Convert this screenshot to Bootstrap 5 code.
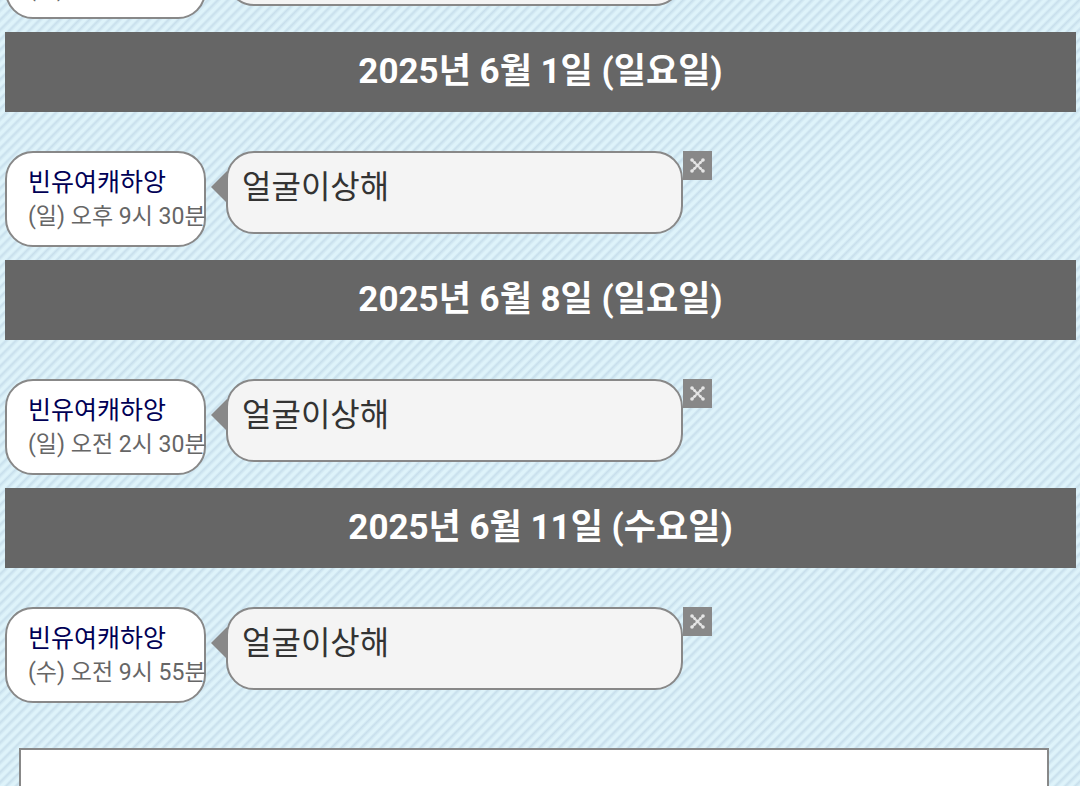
<!DOCTYPE html>
<html lang="ko">
<head>
<meta charset="utf-8">
<meta name="viewport" content="width=device-width, initial-scale=1">
<title>채팅 기록</title>
<link href="https://cdn.jsdelivr.net/npm/bootstrap@5.3.0/dist/css/bootstrap.min.css" rel="stylesheet">
<style>
  body {
    font-family: Roboto, "Noto Sans CJK KR", sans-serif;
    background: #def3fa repeating-linear-gradient(135deg, #c8dfec 0, #def3fa 3px, #def3fa 5px, #c8dfec 7px);
    height: 100vh;
    overflow: hidden;
  }
  .chat-log { margin-top: -77px; padding: 0 4px 0 5px; }
  .day-bar { background: #666; color: #fff; font-size: 35px; line-height: 80px; margin: 13px 0 39px; }
  .author {
    width: 201px; height: 96px; padding: 14px 0 0 21px; margin-right: 20px;
    background: #fff; border: 2px solid #888; border-radius: 28px;
  }
  .author-name { color: #005; font-size: 25px; line-height: 32px; text-decoration: none; }
  .author-time { color: #666; font-size: 23px; line-height: 36px; }
  .bubble {
    width: 457px; height: 83px; padding: 9px 14px; color: #333;
    font-size: 32px; line-height: 50px;
    background: #f4f4f4; border: 2px solid #888; border-radius: 28px;
  }
  .bubble::before {
    content: ""; position: absolute; left: -17px; top: 18px;
    border: solid transparent; border-width: 16px 16px 16px 0; border-right-color: #888;
  }
  .remove { width: 29px; height: 29px; background: #888; }
  .reply { height: 160px; margin: 45px 27px 0 14px; width: calc(100% - 41px); border: 2px solid #888; resize: none; }
</style>
</head>
<body>
<svg class="d-none">
  <symbol id="cross" viewBox="0 0 15 15">
    <path d="M2 2l11 11M13 2L2 13" stroke="#d8d8d8" stroke-width="2"/>
    <g fill="#e6e6e6"><circle cx="2" cy="2" r="1.8"/><circle cx="13" cy="2" r="1.8"/><circle cx="2" cy="13" r="1.8"/><circle cx="13" cy="13" r="1.8"/><circle cx="7.5" cy="7.5" r="1.8"/><circle cx="4.7" cy="4.7" r="1.4"/><circle cx="10.3" cy="4.7" r="1.4"/><circle cx="4.7" cy="10.3" r="1.4"/><circle cx="10.3" cy="10.3" r="1.4"/></g>
  </symbol>
</svg>
<main class="chat-log">
  <article class="d-flex align-items-start">
    <div class="author flex-shrink-0 text-nowrap"><a href="#" class="author-name d-block">빈유여캐하앙</a><div class="author-time">(일) 오후 9시 30분</div></div>
    <div class="bubble position-relative">얼굴이상해</div>
    <button type="button" class="remove border-0 p-0 d-flex align-items-center justify-content-center" aria-label="삭제"><svg width="15" height="15"><use href="#cross"/></svg></button>
  </article>

  <h2 class="day-bar text-center fw-bold">2025년 6월 1일 (일요일)</h2>
  <article class="d-flex align-items-start">
    <div class="author flex-shrink-0 text-nowrap"><a href="#" class="author-name d-block">빈유여캐하앙</a><div class="author-time">(일) 오후 9시 30분</div></div>
    <div class="bubble position-relative">얼굴이상해</div>
    <button type="button" class="remove border-0 p-0 d-flex align-items-center justify-content-center" aria-label="삭제"><svg width="15" height="15"><use href="#cross"/></svg></button>
  </article>

  <h2 class="day-bar text-center fw-bold">2025년 6월 8일 (일요일)</h2>
  <article class="d-flex align-items-start">
    <div class="author flex-shrink-0 text-nowrap"><a href="#" class="author-name d-block">빈유여캐하앙</a><div class="author-time">(일) 오전 2시 30분</div></div>
    <div class="bubble position-relative">얼굴이상해</div>
    <button type="button" class="remove border-0 p-0 d-flex align-items-center justify-content-center" aria-label="삭제"><svg width="15" height="15"><use href="#cross"/></svg></button>
  </article>

  <h2 class="day-bar text-center fw-bold">2025년 6월 11일 (수요일)</h2>
  <article class="d-flex align-items-start">
    <div class="author flex-shrink-0 text-nowrap"><a href="#" class="author-name d-block">빈유여캐하앙</a><div class="author-time">(수) 오전 9시 55분</div></div>
    <div class="bubble position-relative">얼굴이상해</div>
    <button type="button" class="remove border-0 p-0 d-flex align-items-center justify-content-center" aria-label="삭제"><svg width="15" height="15"><use href="#cross"/></svg></button>
  </article>

  <textarea class="reply d-block bg-white" aria-label="메시지 입력"></textarea>
</main>
<script src="https://cdn.jsdelivr.net/npm/bootstrap@5.3.0/dist/js/bootstrap.bundle.min.js"></script>
</body>
</html>
